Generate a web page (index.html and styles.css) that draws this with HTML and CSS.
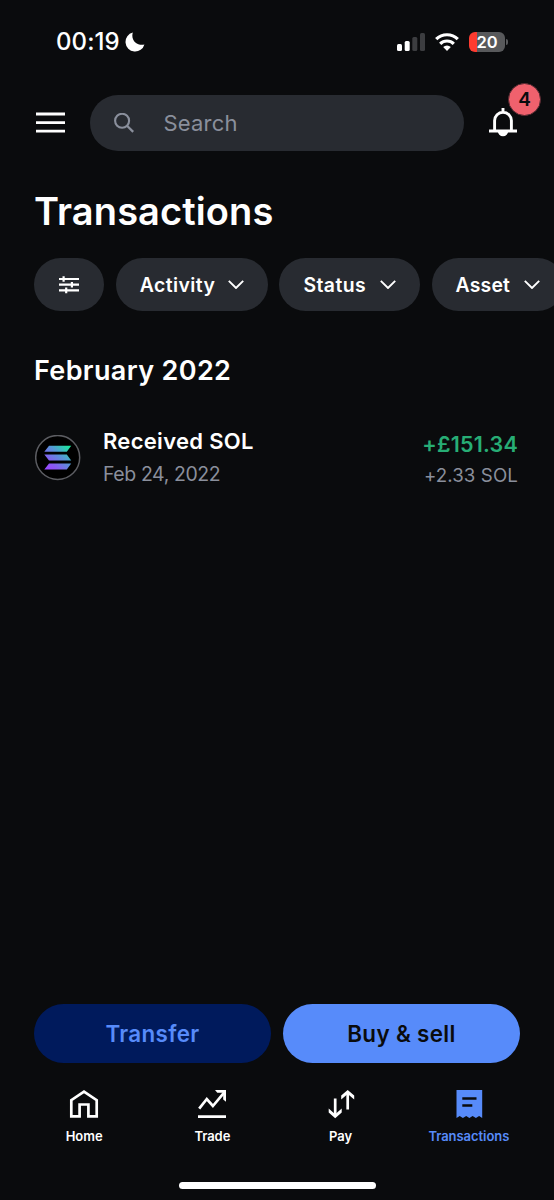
FILE: index.html
```html
<!DOCTYPE html>
<html lang="en">
<head>
<meta charset="utf-8">
<title>Transactions</title>
<link rel="stylesheet" href="styles.css">
</head>
<body>
<div class="screen">
  <div class="status">
    <span class="time">00:19</span>
    <svg class="moon" width="20" height="20" viewBox="0 0 20 20"><path fill="#fff" d="M7.8.6A9.6 9.6 0 1 0 19.4 12.4C14 14.4 5.2 9.6 7.8.6z"/></svg>
    <svg class="signal" width="28" height="18" viewBox="0 0 28 18"><g fill="#fff"><rect x="0" y="11" width="5" height="7" rx="1.5"/><rect x="7.7" y="8" width="5" height="10" rx="1.5"/></g><g fill="#3c3d40"><rect x="15.3" y="4" width="5" height="14" rx="1.5"/><rect x="23" y="0" width="5" height="18" rx="1.5"/></g></svg>
    <svg class="wifi" width="24" height="18" viewBox="0 0 24 18"><g fill="none" stroke="#fff" stroke-width="3.2"><path d="M1.2 6.2a15.3 15.3 0 0 1 21.6 0"/><path d="M5.2 10.8a9.6 9.6 0 0 1 13.6 0"/></g><path fill="#fff" d="M8.2 14a5.4 5.4 0 0 1 7.6 0L12 17.9z"/></svg>
    <div class="battery"><span>20</span></div>
    <i class="battery-tip"></i>
  </div>
  <header class="header">
    <svg class="menu" width="29" height="22" viewBox="0 0 29 22"><path stroke="#fff" stroke-width="2.8" d="M0 2h29M0 10.6h29M0 19.1h29"/></svg>
    <div class="search">
      <svg width="20" height="20" viewBox="0 0 20 20" fill="none" stroke="#8a8f9c"><circle cx="8.1" cy="7.8" r="7" stroke-width="2.1"/><path stroke-width="2.3" d="M13 12.7l6.2 6.2"/></svg>
      <span>Search</span>
    </div>
    <div class="bell">
      <svg width="28" height="30" viewBox="0 0 28 30"><path fill="none" stroke="#fff" stroke-width="2.9" d="M14 0v4M5.6 23V12.6a8.4 8.4 0 0 1 16.8 0V23M0 23h28"/><path fill="#fff" d="M8.8 23h10.4a5.2 5.2 0 0 1-10.4 0z"/></svg>
      <b class="badge">4</b>
    </div>
  </header>
  <h1 class="title">Transactions</h1>
  <div class="chips">
    <div class="chip chip-filter"><svg width="20" height="18" viewBox="0 0 20 18"><path fill="none" stroke="#fff" stroke-width="2.2" d="M0 3h20M0 8.7h20M0 14.4h20M4.6.2v5.6M12.9 5.9v5.6M7.2 11.6v5.6"/></svg></div>
    <div class="chip chip-activity"><span>Activity</span><svg class="chev" viewBox="0 0 16 9"><path d="M.8.8L8 8 15.2.8"/></svg></div>
    <div class="chip chip-status"><span>Status</span><svg class="chev" viewBox="0 0 16 9"><path d="M.8.8L8 8 15.2.8"/></svg></div>
    <div class="chip chip-asset"><span>Asset</span><svg class="chev" viewBox="0 0 16 9"><path d="M.8.8L8 8 15.2.8"/></svg></div>
  </div>
  <h2 class="month">February 2022</h2>
  <div class="row">
    <svg class="coin" width="46" height="46" viewBox="0 0 46 46">
      <defs><linearGradient id="sol" gradientUnits="userSpaceOnUse" x1="12" y1="36" x2="35" y2="10"><stop offset="0" stop-color="#9945ff"/><stop offset=".22" stop-color="#8c55f4"/><stop offset=".6" stop-color="#5497d5"/><stop offset="1" stop-color="#14f195"/></linearGradient></defs>
      <circle cx="22.7" cy="22.5" r="22" fill="#000" stroke="#5c5d62" stroke-width="1.5"/>
      <path fill="url(#sol)" d="M14 10.8H36.2L31.8 16.8H9.3zM9.3 19.6H31.8L36.2 25.6H14zM14 28.6H36.2L31.8 34.6H9.3z"/>
    </svg>
    <div class="info"><div class="name">Received SOL</div><div class="date">Feb 24, 2022</div></div>
    <div class="value"><div class="fiat">+£151.34</div><div class="crypto">+2.33 SOL</div></div>
  </div>
  <div class="actions">
    <div class="btn transfer"><span>Transfer</span></div>
    <div class="btn buy"><span>Buy &amp; sell</span></div>
  </div>
  <nav class="nav">
    <div class="tab home"><svg width="30" height="30" viewBox="0 0 30 30"><path fill="none" stroke="#fff" stroke-width="2.7" d="M2.3 27.3V11.2L15 2.7l12.7 8.5v16.1h-8.3V15.5h-8.8v11.8z"/></svg><span>Home</span></div>
    <div class="tab trade"><svg width="30" height="30" viewBox="0 0 30 30"><path fill="none" stroke="#fff" stroke-width="2.7" d="M2.2 19.7L9.8 10l6.1 7L27.5 3.2M1 27.6h28"/><path fill="#fff" d="M18 1H29v11.8l-2.8-2.2V3.7h-5.9z"/></svg><span>Trade</span></div>
    <div class="tab pay"><svg width="30" height="30" viewBox="0 0 30 30"><path fill="none" stroke="#fff" stroke-width="2.7" d="M9.2 9.5v17M21.7 20.5V3.5"/><path fill="#fff" d="M2.7 19.6v4L9.2 29.3l6.5-5.7v-4L9.2 25.3zM15.2 10.6V6.6L21.7 1l6.5 5.6v4L21.7 5z"/></svg><span>Pay</span></div>
    <div class="tab active"><svg width="30" height="30" viewBox="0 0 30 30"><path fill="#578bfa" d="M2.5 1h25.7v28l-3.1-2-3.2 2-3.3-2-3.2 2-3.2-2-3.3 2-3.2-2-3.2 2z"/><path stroke="#0a0b0d" stroke-width="2.6" d="M8.3 9.5h14.2M8.3 16.5h10"/></svg><span>Transactions</span></div>
  </nav>
  <div class="indicator"></div>
</div>
</body>
</html>
```
FILE: styles.css
```css
* { box-sizing: border-box; }
body { margin: 0; background: #0a0b0d; }
.screen { width: 554px; height: 1200px; overflow: hidden; display: flex; flex-direction: column; background: #0a0b0d; color: #fff; font-family: Inter, "Liberation Sans", sans-serif; }
span, .name, .date, .fiat, .crypto { white-space: nowrap; }
svg { display: block; flex: none; }
.status { height: 83px; flex: none; display: flex; align-items: center; padding-left: 56px; }
.time { width: 69px; font-size: 24px; font-weight: 500; letter-spacing: 0.1px; }
.moon { margin-right: 252px; }
.signal { margin-right: 10px; }
.wifi { margin-right: 10px; }
.battery { width: 36px; height: 20px; border-radius: 6px; background: linear-gradient(90deg, #fd3b30 0 7.5px, #58595b 7.5px); font-size: 16.5px; font-weight: 600; line-height: 20px; text-align: center; }
.battery-tip { width: 2px; height: 6px; margin-left: 1px; border-radius: 0 2px 2px 0; background: #58595b; }
.header { height: 56px; flex: none; margin-top: 12px; display: flex; align-items: center; padding-left: 36px; }
.menu { margin-right: 25px; }
.search { width: 374px; height: 56px; border-radius: 28px; background: #282b31; display: flex; align-items: center; padding-left: 24px; gap: 29.5px; font-size: 22px; letter-spacing: 0.2px; color: #8a8f9c; }
.bell { position: relative; margin-left: 25px; }
.badge { position: absolute; left: 19px; top: -25px; width: 33px; height: 33px; border-radius: 50%; background: #f0616d; border: 1px solid #552a31; color: #0a0b0d; font-size: 19px; font-weight: 600; line-height: 31px; text-align: center; }
.title { margin: 36px 0 0 34px; height: 48px; line-height: 48px; font-size: 38px; font-weight: 600; letter-spacing: 0.1px; }
.chips { margin: 23px 0 0 34px; height: 53px; display: flex; gap: 11.7px; }
.chip { height: 53px; flex: none; border-radius: 27px; background: #282b31; display: flex; align-items: center; padding: 0 24px; justify-content: space-between; font-size: 19.4px; font-weight: 600; letter-spacing: 0.45px; }
.chip span { padding-top: 1px; }
.chip-filter { width: 70px; justify-content: center; }
.chip-activity { width: 152px; }
.chip-status { width: 140.5px; }
.chip-asset { width: 132px; letter-spacing: 0.2px; }
.chev { width: 16px; height: 9px; fill: none; stroke: #fff; stroke-width: 1.9; }
.month { margin: 44px 0 0 34px; height: 32px; line-height: 32px; font-size: 27px; font-weight: 600; letter-spacing: 0.35px; }
.row { margin: 42px 36px 0 35px; height: 56px; display: flex; }
.coin { margin-top: 6px; }
.info { flex: 1; margin-left: 22px; }
.name { height: 24px; line-height: 24px; font-size: 22px; font-weight: 600; letter-spacing: 0.3px; }
.date { height: 24px; line-height: 24px; margin-top: 9px; font-size: 19.5px; letter-spacing: -0.4px; color: #8a8f9c; }
.value { padding-top: 3px; display: flex; flex-direction: column; align-items: flex-end; }
.fiat { height: 24px; line-height: 24px; font-size: 21.5px; font-weight: 600; letter-spacing: 0.2px; color: #27ad75; }
.crypto { height: 24px; line-height: 24px; margin-top: 8px; font-size: 18.7px; letter-spacing: 0.1px; color: #8a8f9c; }
.actions { margin: auto 34px 0; height: 59px; display: flex; gap: 12px; }
.btn { flex: 1; border-radius: 30px; display: flex; align-items: center; justify-content: center; font-size: 22.4px; font-weight: 600; letter-spacing: 0.35px; }
.transfer { background: #001a5c; color: #578bfa; }
.buy { background: #578bfa; color: #0a0b0d; }
.nav { margin: 26px 21px 0 20px; display: grid; grid-template-columns: repeat(4, 1fr); }
.tab { display: flex; flex-direction: column; align-items: center; gap: 9px; font-size: 13px; line-height: 16px; font-weight: 600; letter-spacing: -0.05px; }
.active { color: #578bfa; }
.indicator { width: 197px; height: 7px; margin: 38px 0 11px 179px; border-radius: 4px; background: #fff; flex: none; }
```
